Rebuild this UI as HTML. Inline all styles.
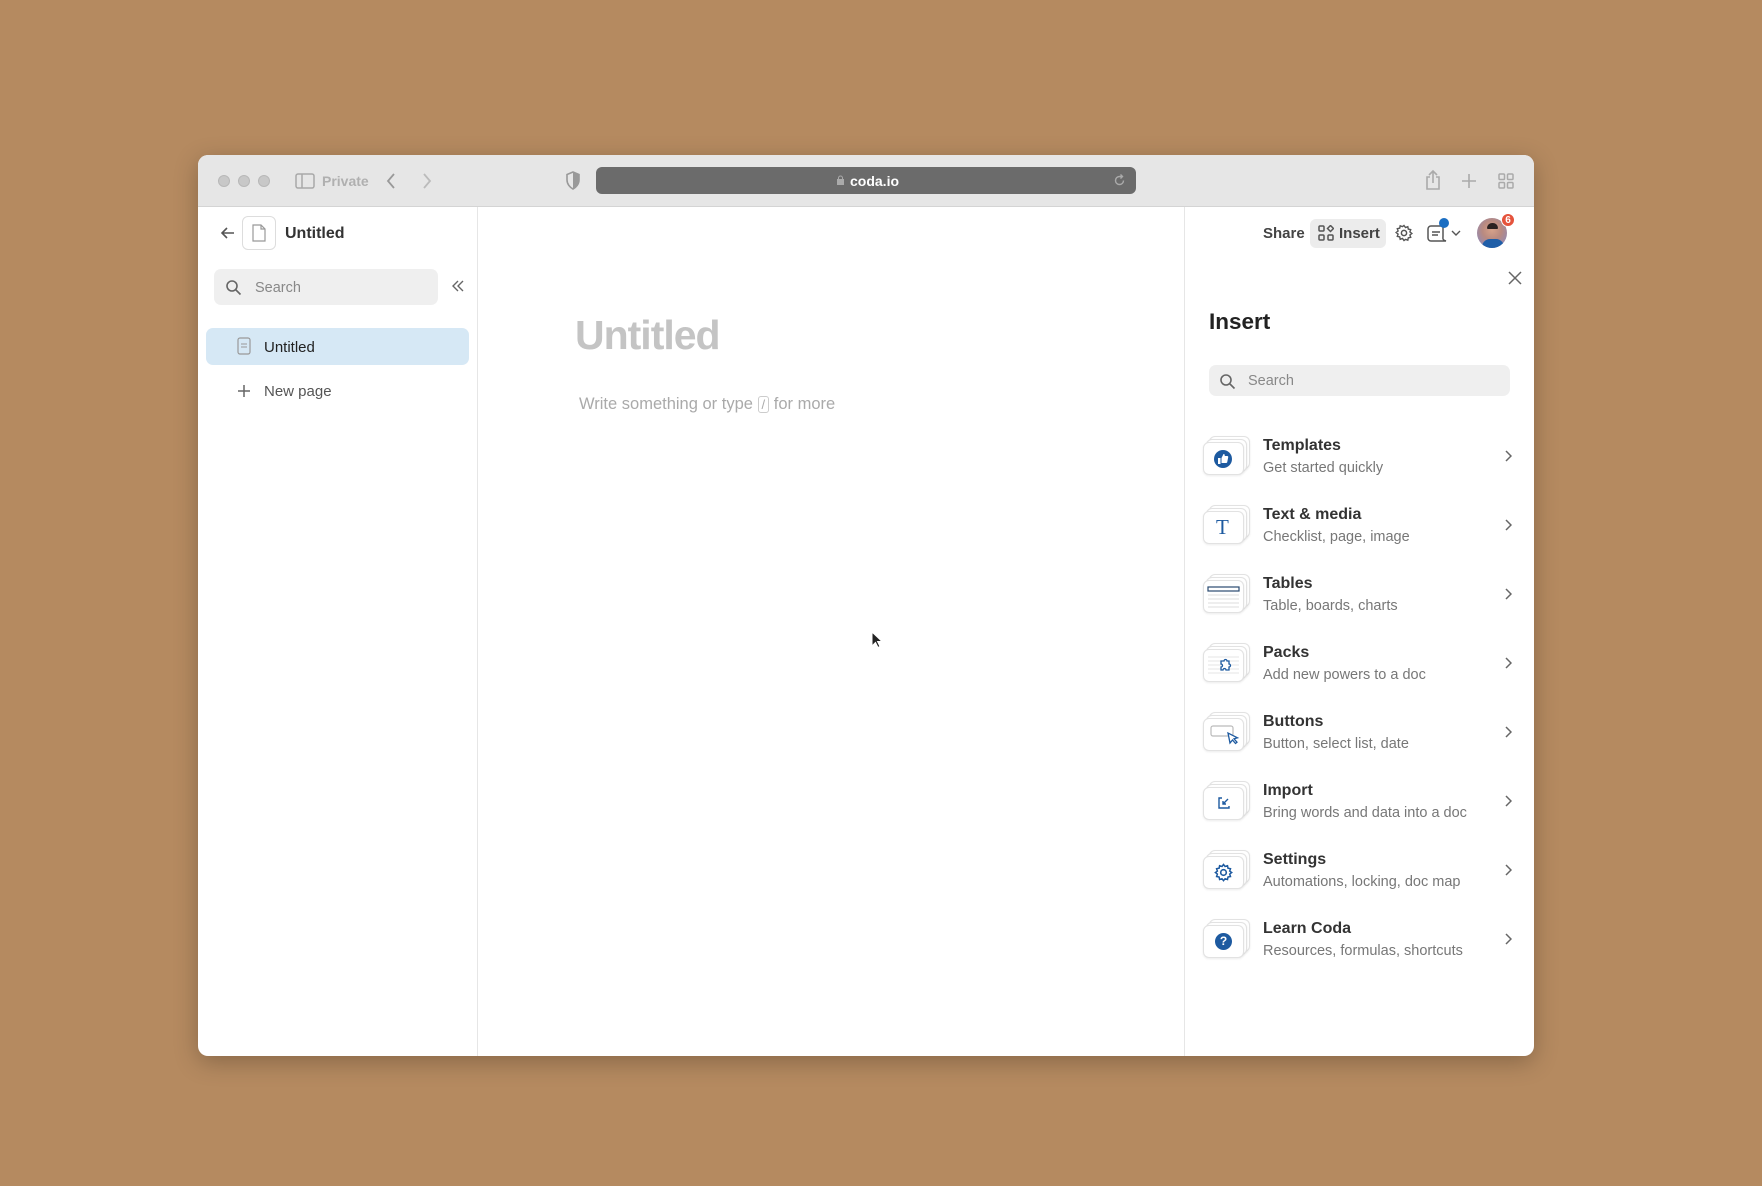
<!DOCTYPE html>
<html><head><meta charset="utf-8"><style>
*{box-sizing:border-box;margin:0;padding:0}
body{width:1762px;height:1186px;background:#b58a60;font-family:"Liberation Sans",sans-serif;position:relative;overflow:hidden}
.a{position:absolute}
.win{left:198px;top:155px;width:1336px;height:901px;background:#fff;border-radius:10px;overflow:hidden;box-shadow:0 6px 24px rgba(0,0,0,.25)}
.tb{left:0;top:0;width:1336px;height:52px;background:#e6e6e6;border-bottom:1px solid #d4d4d4}
.dot{width:12px;height:12px;border-radius:50%;background:#c8c8c8;border:1px solid #b8b8b8;top:20px}
.card{width:41px;height:33px;border:1px solid #e2e2e2;border-radius:6px;background:#fff;box-shadow:0 1px 2px rgba(0,0,0,.08)}
.row{position:absolute;left:1202px;width:320px;height:50px}
.row .t{position:absolute;left:61px;top:-7px;font-size:16px;font-weight:bold;color:#333;white-space:nowrap}
.row .s{position:absolute;left:61px;top:16px;font-size:14.5px;color:#777;white-space:nowrap}
.row .c{position:absolute;left:302px;top:6px}
</style></head><body>
<div class="a win">
 <div class="a tb">
  <div class="a dot" style="left:20px"></div><div class="a dot" style="left:40px"></div><div class="a dot" style="left:60px"></div>
  <svg class="a" style="left:97px;top:18px" width="20" height="16"><rect x="1" y="1" width="18" height="14" rx="2" fill="none" stroke="#a8a8a8" stroke-width="1.5"/><line x1="7" y1="1" x2="7" y2="15" stroke="#a8a8a8" stroke-width="1.5"/></svg>
  <div class="a" style="left:124px;top:18px;font-size:14px;color:#b0b0b0;font-weight:bold">Private</div>
  <svg class="a" style="left:187px;top:17px" width="12" height="18"><path d="M9 2L3 9l6 7" fill="none" stroke="#999" stroke-width="1.8"/></svg>
  <svg class="a" style="left:223px;top:17px" width="12" height="18"><path d="M3 2l6 7-6 7" fill="none" stroke="#bbb" stroke-width="1.8"/></svg>
  <svg class="a" style="left:367px;top:16px" width="16" height="19"><path d="M8 1L2 3.5V9c0 4 3 7.5 6 9 3-1.5 6-5 6-9V3.5z" fill="none" stroke="#999" stroke-width="1.6"/><path d="M8 1v17c3-1.5 6-5 6-9V3.5z" fill="#999"/></svg>
  <div class="a" style="left:398px;top:12px;width:540px;height:27px;background:#6b6b6b;border-radius:6px"></div>
  <svg class="a" style="left:638px;top:20px" width="9" height="11"><rect x="1" y="4" width="7" height="6" fill="#aaa"/><path d="M2.5 4V3a2 2 0 014 0v1" fill="none" stroke="#aaa"/></svg>
  <div class="a" style="left:652px;top:18px;font-size:14px;color:#fff;font-weight:bold">coda.io</div>
  <svg class="a" style="left:915px;top:19px" width="13" height="13"><path d="M10.5 6.5A4 4 0 116.5 2.5h2" fill="none" stroke="#aaa" stroke-width="1.4"/><path d="M7.5 0.5l2 2-2 2" fill="none" stroke="#aaa" stroke-width="1.4"/></svg>
  <svg class="a" style="left:1226px;top:14px" width="18" height="22"><path d="M6 8H3v12h12V8h-3M9 14V2M5 6l4-4 4 4" fill="none" stroke="#aaa" stroke-width="1.6"/></svg>
  <svg class="a" style="left:1263px;top:18px" width="16" height="16"><path d="M8 1v14M1 8h14" stroke="#aaa" stroke-width="1.6"/></svg>
  <svg class="a" style="left:1300px;top:18px" width="16" height="16" fill="none" stroke="#aaa" stroke-width="1.5"><rect x="1" y="1" width="5.5" height="5.5" rx="1"/><rect x="9.5" y="1" width="5.5" height="5.5" rx="1"/><rect x="1" y="9.5" width="5.5" height="5.5" rx="1"/><rect x="9.5" y="9.5" width="5.5" height="5.5" rx="1"/></svg>
 </div>
 <div class="a" style="left:279px;top:52px;width:1px;height:849px;background:#e6e6e6"></div>
 <svg class="a" style="left:22px;top:70px" width="16" height="16"><path d="M14 8H2M7 3L2 8l5 5" fill="none" stroke="#555" stroke-width="1.6"/></svg>
 <div class="a" style="left:44px;top:61px;width:34px;height:34px;border:1px solid #ddd;border-radius:6px"></div>
 <svg class="a" style="left:53px;top:69px" width="16" height="18"><path d="M2 1h8l4 4v12H2z M10 1v4h4" fill="none" stroke="#999" stroke-width="1.2"/></svg>
 <div class="a" style="left:87px;top:70px;font-size:16px;font-weight:bold;color:#333">Untitled</div>
 <div class="a" style="left:16px;top:114px;width:224px;height:36px;background:#efefef;border-radius:7px"></div>
 <svg class="a" style="left:27px;top:124px" width="17" height="17"><circle cx="7" cy="7" r="5" fill="none" stroke="#666" stroke-width="1.6"/><path d="M11 11l4.5 4.5" stroke="#666" stroke-width="1.6"/></svg>
 <div class="a" style="left:57px;top:125px;font-size:14.5px;color:#888">Search</div>
 <svg class="a" style="left:253px;top:124px" width="14" height="14"><path d="M7 2L2 7l5 5M12 2L7 7l5 5" fill="none" stroke="#666" stroke-width="1.4"/></svg>
 <div class="a" style="left:8px;top:173px;width:263px;height:37px;background:#d6e8f5;border-radius:7px"></div>
 <svg class="a" style="left:39px;top:182px" width="14" height="18"><rect x="1" y="1" width="12" height="16" rx="2" fill="none" stroke="#999" stroke-width="1.2"/><path d="M4 7h6M4 10h6" stroke="#999"/></svg>
 <div class="a" style="left:66px;top:184px;font-size:15px;color:#222">Untitled</div>
 <svg class="a" style="left:39px;top:229px" width="14" height="14"><path d="M7 1v12M1 7h12" stroke="#666" stroke-width="1.5"/></svg>
 <div class="a" style="left:66px;top:228px;font-size:15px;color:#555">New page</div>
 <div class="a" style="left:377px;top:157px;font-size:41px;font-weight:bold;color:#c4c4c4;letter-spacing:-1px">Untitled</div>
 <div class="a" style="left:381px;top:240px;font-size:16.5px;color:#aaa;white-space:nowrap">Write something or type <span style="display:inline-block;border:1px solid #ccc;border-radius:3px;padding:0 3px;font-size:13px;line-height:15px">/</span> for more</div>
 <svg class="a" style="left:673px;top:476px" width="12" height="18"><path d="M1 1v14l3.5-3.5 2.5 5 2-1-2.5-5H11z" fill="#222" stroke="#fff" stroke-width="1"/></svg>
 <div class="a" style="left:986px;top:52px;width:1px;height:849px;background:#e6e6e6"></div>
 <div class="a" style="left:1065px;top:70px;font-size:15px;font-weight:bold;color:#444">Share</div>
 <div class="a" style="left:1112px;top:64px;width:76px;height:29px;background:#ececec;border-radius:6px"></div>
 <svg class="a" style="left:1120px;top:70px" width="16" height="16" fill="none" stroke="#555" stroke-width="1.5"><rect x="1" y="1" width="5" height="5" rx="1"/><rect x="1" y="10" width="5" height="5" rx="1"/><rect x="10" y="10" width="5" height="5" rx="1"/><path d="M12.5 0.5l3 3-3 3-3-3z"/></svg>
 <div class="a" style="left:1141px;top:70px;font-size:15px;font-weight:bold;color:#444">Insert</div>
 <svg class="a" style="left:1197px;top:69px" width="18" height="18"><circle cx="9" cy="9" r="2.6" fill="none" stroke="#555" stroke-width="1.5"/><path d="M9 1.5l1.5 2 2.3-.8.5 2.4 2.4.5-.8 2.3 2 1.6-2 1.5.8 2.3-2.4.5-.5 2.4-2.3-.8L9 16.5l-1.5-2-2.3.8-.5-2.4-2.4-.5.8-2.3-2-1.6 2-1.5-.8-2.3 2.4-.5.5-2.4 2.3.8z" fill="none" stroke="#555" stroke-width="1.4"/></svg>
 <svg class="a" style="left:1229px;top:69px" width="22" height="19"><path d="M4 2h12v10c0 2-1 4 3 5H4a3 3 0 01-3-3V5a3 3 0 013-3z" fill="none" stroke="#555" stroke-width="1.5"/><path d="M5 8h8M5 11h6" stroke="#555" stroke-width="1.4"/></svg>
 <div class="a" style="left:1241px;top:63px;width:10px;height:10px;border-radius:50%;background:#1b6ec2"></div>
 <svg class="a" style="left:1253px;top:75px" width="10" height="7"><path d="M1 1l4 4 4-4" fill="none" stroke="#555" stroke-width="1.4"/></svg>
 <div class="a" style="left:1279px;top:63px;width:30px;height:30px;border-radius:50%;background:radial-gradient(circle at 50% 40%,#d7a28a 0,#b98a80 40%,#9b8aa8 70%);overflow:hidden"><div style="position:absolute;left:5px;top:21px;width:22px;height:12px;background:#1f5ea8;border-radius:8px 8px 0 0"></div><div style="position:absolute;left:10px;top:5px;width:11px;height:6px;background:#2a2020;border-radius:5px 5px 1px 1px"></div></div>
 <div class="a" style="left:1303px;top:58px;width:14px;height:14px;border-radius:50%;background:#e5533c;color:#fff;font-size:10px;font-weight:bold;text-align:center;line-height:14px;border:1px solid #fff">6</div>
 <svg class="a" style="left:1310px;top:116px" width="14" height="14"><path d="M1 1l12 12M13 1L1 13" stroke="#666" stroke-width="1.5"/></svg>
 <div class="a" style="left:1011px;top:154px;font-size:22.5px;font-weight:bold;color:#222">Insert</div>
 <div class="a" style="left:1011px;top:210px;width:301px;height:31px;background:#efefef;border-radius:7px"></div>
 <svg class="a" style="left:1021px;top:218px" width="17" height="17"><circle cx="7" cy="7" r="5" fill="none" stroke="#666" stroke-width="1.6"/><path d="M11 11l4.5 4.5" stroke="#666" stroke-width="1.6"/></svg>
 <div class="a" style="left:1050px;top:218px;font-size:14.5px;color:#888">Search</div>
</div>
<div class="row" style="top:444px"><div class="a card" style="left:7px;top:-8px"></div><div class="a card" style="left:4px;top:-5px"></div><div class="a card" style="left:1px;top:-2px"></div>
<svg class="a" style="left:11px;top:5px" width="20" height="20"><circle cx="10" cy="10" r="9" fill="#1d5aa0"/><path d="M5 9h2.5v6H5zM8.5 9l2-4c1 0 1.5.7 1.2 2h2.5c.8 0 1.2.7 1 1.3l-1 5c-.2.5-.6.7-1 .7H8.5z" fill="#fff"/></svg>
<div class="t">Templates</div><div class="s">Get started quickly</div><svg class="c" width="8" height="12"><path d="M2 1l5 5-5 5" fill="none" stroke="#666" stroke-width="1.5"/></svg></div>
<div class="row" style="top:513px"><div class="a card" style="left:7px;top:-8px"></div><div class="a card" style="left:4px;top:-5px"></div><div class="a card" style="left:1px;top:-2px"></div>
<div class="a" style="left:14px;top:2px;font-family:'Liberation Serif',serif;font-size:21px;color:#1d5aa0">T</div>
<div class="t">Text &amp; media</div><div class="s">Checklist, page, image</div><svg class="c" width="8" height="12"><path d="M2 1l5 5-5 5" fill="none" stroke="#666" stroke-width="1.5"/></svg></div>
<div class="row" style="top:582px"><div class="a card" style="left:7px;top:-8px"></div><div class="a card" style="left:4px;top:-5px"></div><div class="a card" style="left:1px;top:-2px"></div>
<svg class="a" style="left:5px;top:2px" width="34" height="26"><rect x="1" y="3" width="31" height="4" fill="none" stroke="#2a4a70" stroke-width="1.2"/><path d="M1 11h31M1 15h31M1 19h31M1 23h31" stroke="#ddd"/></svg>
<div class="t">Tables</div><div class="s">Table, boards, charts</div><svg class="c" width="8" height="12"><path d="M2 1l5 5-5 5" fill="none" stroke="#666" stroke-width="1.5"/></svg></div>
<div class="row" style="top:651px"><div class="a card" style="left:7px;top:-8px"></div><div class="a card" style="left:4px;top:-5px"></div><div class="a card" style="left:1px;top:-2px"></div>
<svg class="a" style="left:5px;top:2px" width="34" height="26"><path d="M1 4h31M1 8h31M1 12h31M1 16h31M1 20h31" stroke="#e6e6e6"/><path d="M14 8h3a1.5 1.5 0 013 0h2v3a1.5 1.5 0 010 3v3h-3a1.5 1.5 0 00-3 0h-2v-3a1.5 1.5 0 000-3z" fill="#fff" stroke="#1d5aa0" stroke-width="1.3"/></svg>
<div class="t">Packs</div><div class="s">Add new powers to a doc</div><svg class="c" width="8" height="12"><path d="M2 1l5 5-5 5" fill="none" stroke="#666" stroke-width="1.5"/></svg></div>
<div class="row" style="top:720px"><div class="a card" style="left:7px;top:-8px"></div><div class="a card" style="left:4px;top:-5px"></div><div class="a card" style="left:1px;top:-2px"></div>
<svg class="a" style="left:8px;top:3px" width="30" height="24"><rect x="1" y="3" width="22" height="10" rx="2" fill="none" stroke="#bbb" stroke-width="1.2"/><path d="M18 10l2 10 2.5-3 3 3.5 1.5-1.3-3-3.4 3.5-1z" fill="#fff" stroke="#1d5aa0" stroke-width="1.3"/></svg>
<div class="t">Buttons</div><div class="s">Button, select list, date</div><svg class="c" width="8" height="12"><path d="M2 1l5 5-5 5" fill="none" stroke="#666" stroke-width="1.5"/></svg></div>
<div class="row" style="top:789px"><div class="a card" style="left:7px;top:-8px"></div><div class="a card" style="left:4px;top:-5px"></div><div class="a card" style="left:1px;top:-2px"></div>
<svg class="a" style="left:15px;top:7px" width="14" height="14"><path d="M5 2H2v10h10v-2" fill="none" stroke="#1d5aa0" stroke-width="1.4"/><path d="M11 3L6 8M6 5v3h3" fill="none" stroke="#1d5aa0" stroke-width="1.4"/></svg>
<div class="t">Import</div><div class="s">Bring words and data into a doc</div><svg class="c" width="8" height="12"><path d="M2 1l5 5-5 5" fill="none" stroke="#666" stroke-width="1.5"/></svg></div>
<div class="row" style="top:858px"><div class="a card" style="left:7px;top:-8px"></div><div class="a card" style="left:4px;top:-5px"></div><div class="a card" style="left:1px;top:-2px"></div>
<svg class="a" style="left:12px;top:5px" width="19" height="19"><circle cx="9.5" cy="9.5" r="2.8" fill="none" stroke="#1d5aa0" stroke-width="1.6"/><path d="M9.5 1.5l1.6 2 2.4-.8.5 2.5 2.5.5-.8 2.4 2 1.4-2 1.6.8 2.4-2.5.5-.5 2.5-2.4-.8-1.6 2-1.5-2-2.4.8-.5-2.5-2.5-.5.8-2.4-2-1.6 2-1.4-.8-2.4 2.5-.5.5-2.5 2.4.8z" fill="none" stroke="#1d5aa0" stroke-width="1.5"/></svg>
<div class="t">Settings</div><div class="s">Automations, locking, doc map</div><svg class="c" width="8" height="12"><path d="M2 1l5 5-5 5" fill="none" stroke="#666" stroke-width="1.5"/></svg></div>
<div class="row" style="top:927px"><div class="a card" style="left:7px;top:-8px"></div><div class="a card" style="left:4px;top:-5px"></div><div class="a card" style="left:1px;top:-2px"></div>
<div class="a" style="left:13px;top:6px;width:17px;height:17px;border-radius:50%;background:#1d5aa0;color:#fff;font-size:12px;font-weight:bold;text-align:center;line-height:17px">?</div>
<div class="t">Learn Coda</div><div class="s">Resources, formulas, shortcuts</div><svg class="c" width="8" height="12"><path d="M2 1l5 5-5 5" fill="none" stroke="#666" stroke-width="1.5"/></svg></div>
</body></html>
